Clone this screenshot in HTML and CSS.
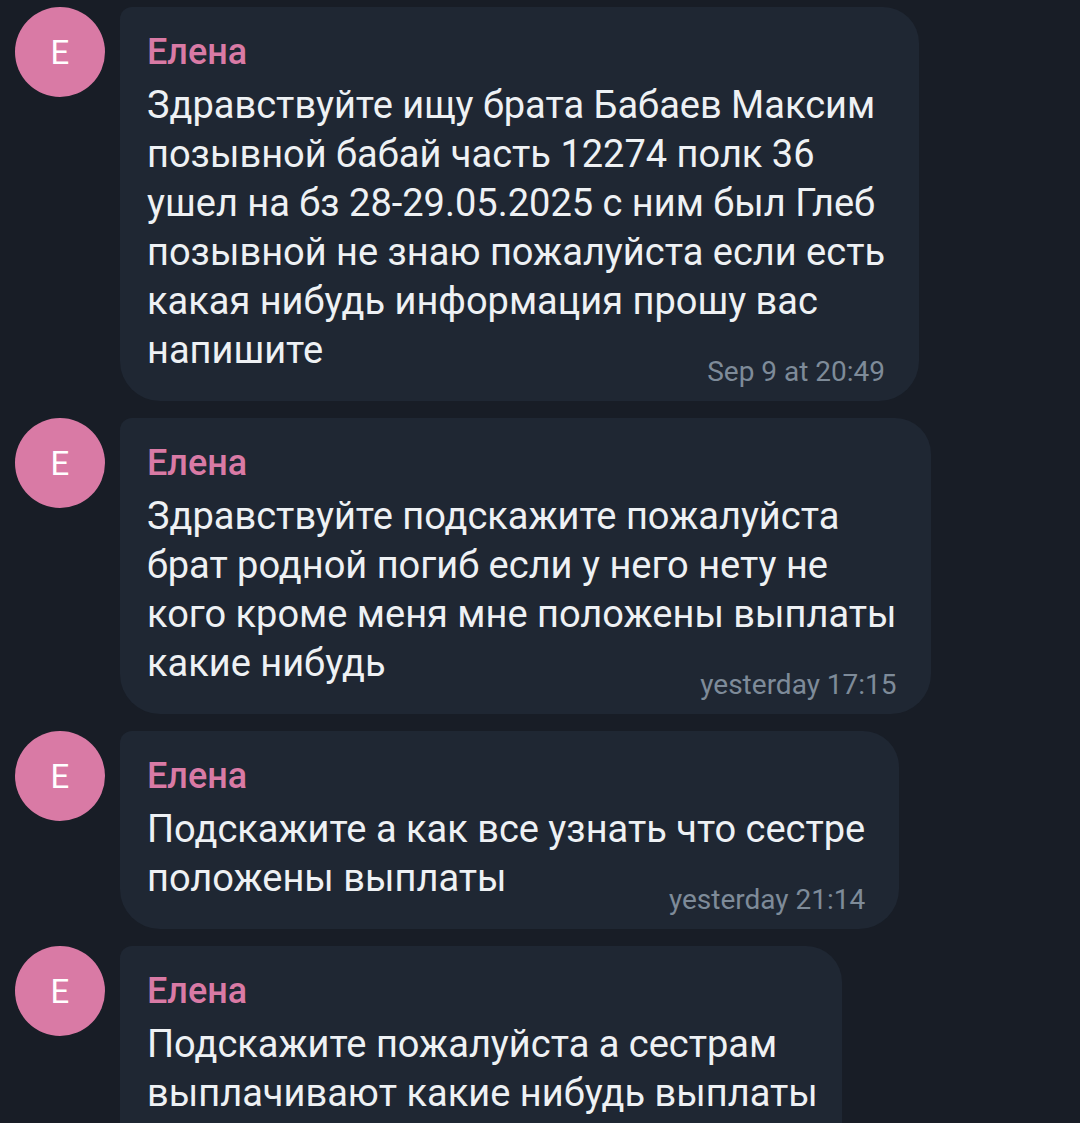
FILE: index.html
```html
<!DOCTYPE html>
<html lang="ru">
<head>
  <meta charset="UTF-8">
  <meta name="viewport" content="width=device-width, initial-scale=1.0">
  <title>Чат</title>
  <link rel="stylesheet" href="styles.css">
</head>
<body>
  <div class="chat">
    <div class="message">
      <div class="avatar">E</div>
      <div class="bubble">
        <div class="name">Елена</div>
        <div class="text">Здравствуйте ищу брата Бабаев Максим<br>позывной бабай часть 12274 полк 36<br>ушел на бз 28-29.05.2025 с ним был Глеб<br>позывной не знаю пожалуйста если есть<br>какая нибудь информация прошу вас<br>напишите</div>
        <div class="time">Sep 9 at 20:49</div>
      </div>
    </div>

    <div class="message">
      <div class="avatar">E</div>
      <div class="bubble">
        <div class="name">Елена</div>
        <div class="text">Здравствуйте подскажите пожалуйста<br>брат родной погиб если у него нету не<br>кого кроме меня мне положены выплаты<br>какие нибудь</div>
        <div class="time">yesterday 17:15</div>
      </div>
    </div>

    <div class="message">
      <div class="avatar">E</div>
      <div class="bubble">
        <div class="name">Елена</div>
        <div class="text">Подскажите а как все узнать что сестре<br>положены выплаты</div>
        <div class="time">yesterday 21:14</div>
      </div>
    </div>

    <div class="message">
      <div class="avatar">E</div>
      <div class="bubble bubble-narrow">
        <div class="name">Елена</div>
        <div class="text">Подскажите пожалуйста а сестрам<br>выплачивают какие нибудь выплаты</div>
        <div class="time time-below">yesterday 21:30</div>
      </div>
    </div>
  </div>
</body>
</html>
```

FILE: styles.css
```css
body {
  margin: 0;
  background-color: #181d26;
  font-family: Roboto, "Noto Sans", sans-serif;
  color: #eef1f4;
  height: 1123px;
  overflow: hidden;
}

.chat {
  display: flex;
  flex-direction: column;
  gap: 17px;
  padding: 7px 0 0 15px;
}

.message {
  display: flex;
  align-items: flex-start;
  gap: 15px;
}

.avatar {
  flex: none;
  width: 90px;
  height: 90px;
  border-radius: 50%;
  background-color: #d97aa5;
  color: #fff;
  font-size: 33px;
  display: flex;
  align-items: center;
  justify-content: center;
}

.bubble {
  background-color: #1f2733;
  border-radius: 12px 36px 40px 40px;
  padding: 25px 34px 14px 27px;
}

.bubble-narrow {
  padding-right: 24px;
}

.name {
  color: #d97aa5;
  font-size: 36px;
  font-weight: 500;
  line-height: 40px;
  margin-bottom: 9px;
}

.text {
  font-size: 38px;
  line-height: 49px;
  white-space: nowrap;
}

.time {
  color: #7e8b99;
  font-size: 28px;
  line-height: 30px;
  text-align: right;
  margin-top: -18px;
}

.time-below {
  margin-top: 12px;
}
```
